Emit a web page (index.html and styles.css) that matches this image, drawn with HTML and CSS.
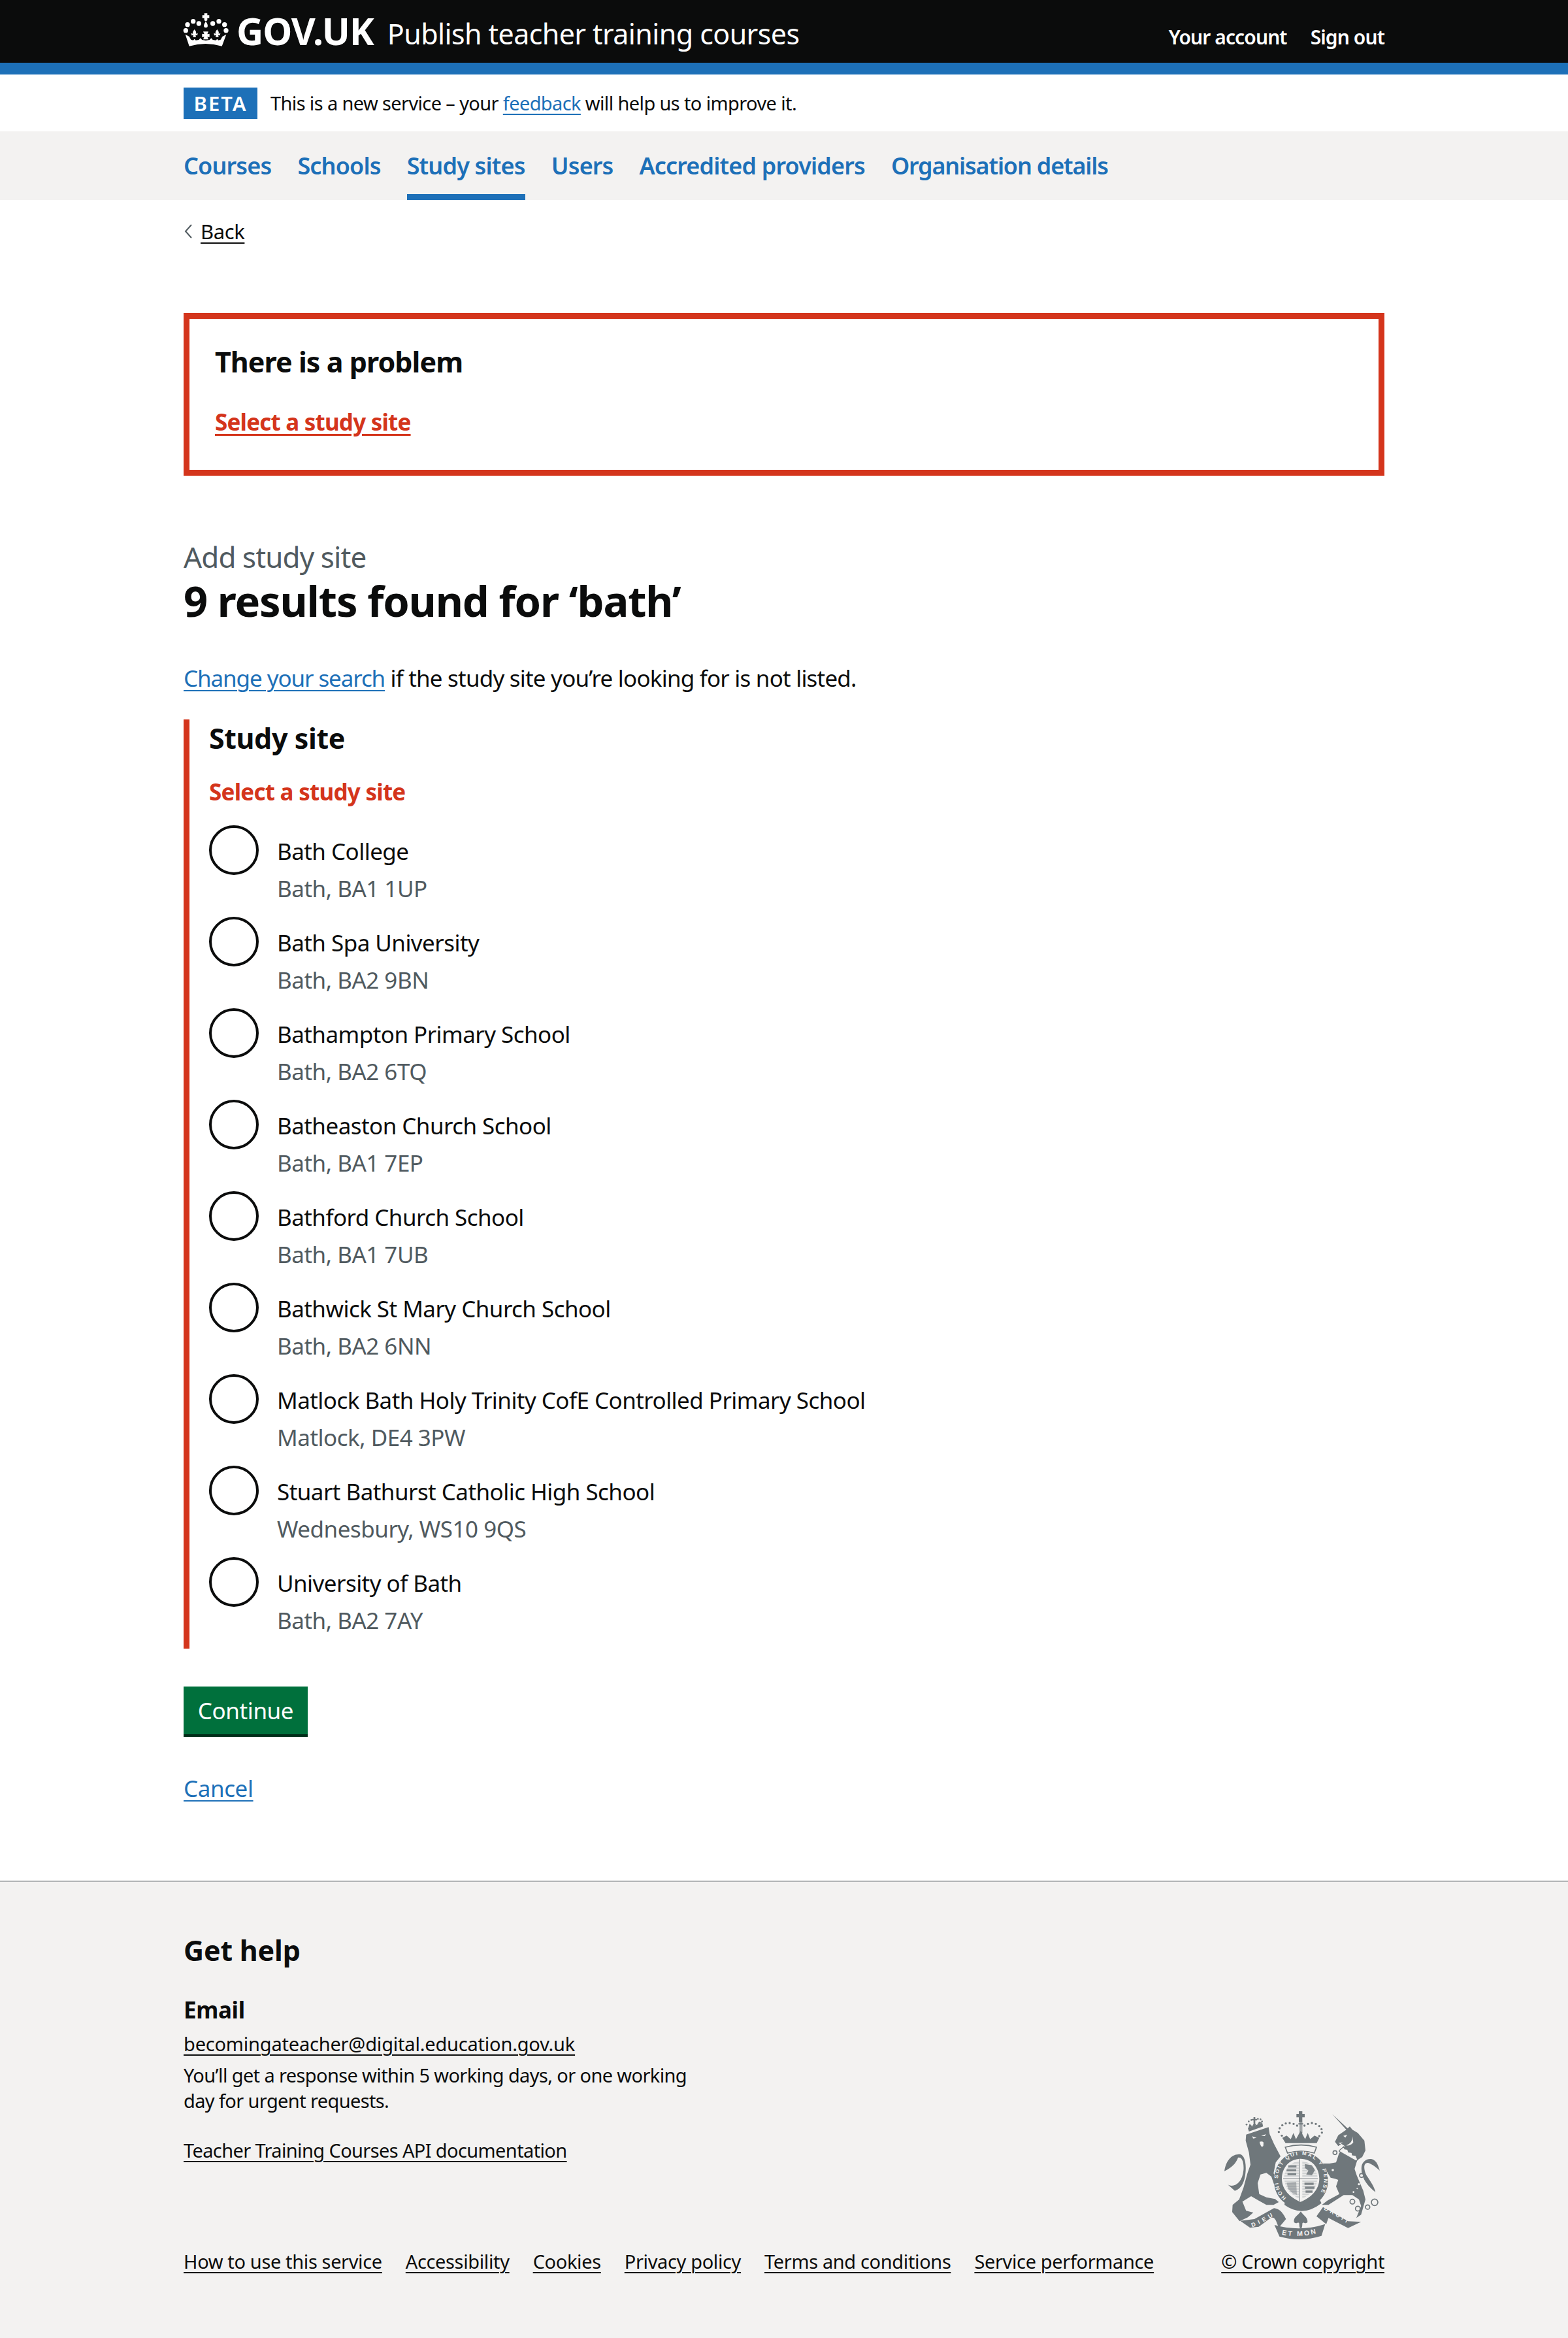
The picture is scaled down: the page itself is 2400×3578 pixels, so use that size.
FILE: index.html
```html
<!DOCTYPE html>
<html lang="en">
<head>
<meta charset="utf-8">
<title>Publish teacher training courses</title>
<link rel="stylesheet" href="styles.css">
</head>
<body>
<header class="topbar">
  <div class="wrap topbar-inner">
    <div class="brand">
      <svg class="crown" viewBox="0 0 270 180" aria-hidden="true">
        <g fill="#fff">
          <path d="M113 16h14v9h9v13h-9v10l-7 5l-7-5V38h-9V25h9z"/>
          <path d="M120 54c8 10 10 18 8 24c-2 5-14 5-16 0c-2-6 0-14 8-24z"/>
          <circle cx="62" cy="53" r="11"/><circle cx="180" cy="53" r="11"/>
          <circle cx="88" cy="63" r="11"/><circle cx="152" cy="63" r="11"/>
          <circle cx="36" cy="68" r="11"/><circle cx="206" cy="68" r="11"/>
          <circle cx="28" cy="95" r="11"/><circle cx="213" cy="95" r="11"/>
          <path d="M68 90c7 8 9 14 7 20l8-3l-2 11l-8-2l2 9h-14l2-9l-8 2l-2-11l8 3c-2-6 0-12 7-20z"/>
          <path d="M172 90c7 8 9 14 7 20l8-3l-2 11l-8-2l2 9h-14l2-9l-8 2l-2-11l8 3c-2-6 0-12 7-20z"/>
          <path d="M108 100h24l-5 12l10-2v16l-10-2l5 12h-24l5-12l-10 2v-16l10 2z"/>
          <path d="M26 113l18 10l8 14l10 3l6-6l6 6l14-2l7-8l8 8l17 3l17-3l8-8l7 8l14 2l6-6l6 6l10-3l8-14l18-10l-20 54q-75-22-150 0z"/>
        </g>
      </svg>
      <span class="logotype">GOV.UK</span>
      <span class="service">Publish teacher training courses</span>
    </div>
    <nav class="account">
      <a href="#">Your account</a>
      <a href="#">Sign out</a>
    </nav>
  </div>
</header>
<div class="blue-rule"></div>
<div class="wrap beta">
  <strong class="tag">BETA</strong>
  <span>This is a new service – your <a class="link" href="#">feedback</a> will help us to improve it.</span>
</div>
<nav class="tabs">
  <ul class="wrap tab-list">
    <li><a href="#">Courses</a></li>
    <li><a href="#">Schools</a></li>
    <li class="current"><a href="#">Study sites</a></li>
    <li><a href="#">Users</a></li>
    <li><a href="#">Accredited providers</a></li>
    <li><a href="#">Organisation details</a></li>
  </ul>
</nav>
<main class="wrap main">
  <a class="back" href="#"><svg class="chev" viewBox="0 0 15 24" aria-hidden="true"><path d="M12 2L3 12l9 10" fill="none" stroke="#505a5f" stroke-width="2"/></svg><span>Back</span></a>
  <section class="summary">
    <h2>There is a problem</h2>
    <a href="#">Select a study site</a>
  </section>
  <p class="caption">Add study site</p>
  <h1>9 results found for ‘bath’</h1>
  <p class="intro"><a class="link" href="#">Change your search</a> if the study site you’re looking for is not listed.</p>
  <form class="group">
    <h2 class="legend">Study site</h2>
    <p class="error">Select a study site</p>
    <div class="radio"><span class="circle"></span><div><div class="name">Bath College</div><div class="hint">Bath, BA1 1UP</div></div></div>
    <div class="radio"><span class="circle"></span><div><div class="name">Bath Spa University</div><div class="hint">Bath, BA2 9BN</div></div></div>
    <div class="radio"><span class="circle"></span><div><div class="name">Bathampton Primary School</div><div class="hint">Bath, BA2 6TQ</div></div></div>
    <div class="radio"><span class="circle"></span><div><div class="name">Batheaston Church School</div><div class="hint">Bath, BA1 7EP</div></div></div>
    <div class="radio"><span class="circle"></span><div><div class="name">Bathford Church School</div><div class="hint">Bath, BA1 7UB</div></div></div>
    <div class="radio"><span class="circle"></span><div><div class="name">Bathwick St Mary Church School</div><div class="hint">Bath, BA2 6NN</div></div></div>
    <div class="radio"><span class="circle"></span><div><div class="name">Matlock Bath Holy Trinity CofE Controlled Primary School</div><div class="hint">Matlock, DE4 3PW</div></div></div>
    <div class="radio"><span class="circle"></span><div><div class="name">Stuart Bathurst Catholic High School</div><div class="hint">Wednesbury, WS10 9QS</div></div></div>
    <div class="radio"><span class="circle"></span><div><div class="name">University of Bath</div><div class="hint">Bath, BA2 7AY</div></div></div>
  </form>
  <a class="button" href="#">Continue</a>
  <p class="cancel"><a class="link" href="#">Cancel</a></p>
</main>
<footer class="footer">
  <div class="wrap footer-inner">
    <h2>Get help</h2>
    <h3>Email</h3>
    <p class="mail"><a href="#">becomingateacher@digital.education.gov.uk</a></p>
    <p class="note">You’ll get a response within 5 working days, or one working<br>day for urgent requests.</p>
    <p class="api"><a href="#">Teacher Training Courses API documentation</a></p>
    <div class="meta">
      <ul>
        <li><a href="#">How to use this service</a></li>
        <li><a href="#">Accessibility</a></li>
        <li><a href="#">Cookies</a></li>
        <li><a href="#">Privacy policy</a></li>
        <li><a href="#">Terms and conditions</a></li>
        <li><a href="#">Service performance</a></li>
      </ul>
      <div class="copy">
        <svg class="crest" viewBox="510 135 735 615" aria-label="Royal coat of arms">
          <defs>
            <path id="ring" d="M806 548A106 112 0 1 1 942 548"/>
            <path id="rb1" d="M650 682Q705 660 762 622"/>
            <path id="rb2" d="M785 716Q870 734 962 706"/>
            <path id="rb3" d="M978 602Q1040 630 1106 680"/>
            <pattern id="hatch" width="4" height="4" patternUnits="userSpaceOnUse">
              <rect width="4" height="4" fill="#f3f2f1"/>
              <rect width="4" height="2" fill="#c5c9ca"/>
            </pattern>
          </defs>
          <g fill="#6f777b">
            <!-- lion -->
            <g transform="translate(510 135)">
              <path d="M112 122L215 88L220 120L240 165L270 222L248 250L238 300L262 338L272 352L240 350L228 315L205 298L178 305L165 345L172 395L205 410L245 418L262 432L238 445L205 445L170 425L135 405L95 430L112 472L145 480L120 502L82 520L48 478L50 445L80 420L100 365L118 300L132 260L125 205L110 150Z"/>
              <path d="M12 290C20 240 45 215 75 213C100 208 112 240 110 285C108 330 95 370 60 380L28 352C55 368 95 345 100 285C103 245 90 222 75 228C65 255 45 275 12 290Z"/>
              <path d="M125 108L190 85L186 68L120 92Z"/>
              <path d="M146 42h8v8h8v7h-8v14h-8V57h-8v-7h8z"/>
              <path d="M122 92L128 72L140 84L150 66L160 80L172 62L186 68Z"/>
              <circle cx="114" cy="76" r="4"/><circle cx="124" cy="62" r="4"/><circle cx="136" cy="55" r="4"/>
              <circle cx="166" cy="50" r="4"/><circle cx="178" cy="52" r="4"/><circle cx="185" cy="62" r="4"/>
              <g fill="#f3f2f1">
                <path d="M140 130l20 7l-16 3zM203 120l-22 9l17 0z"/>
                <path d="M174 155q12-4 18 3l-1 16q-6 8-11 0q-5-9-6-19z"/>
              </g>
            </g>
            <!-- royal crown -->
            <path d="M864 150h16v12h11v16h-11v22h-16v-22h-11v-16h11z"/>
            <path d="M803 296H946L958 272L936 262L916 278L905 250L893 278L872 240L851 278L839 250L827 278L808 262L788 272Z"/>
            <path d="M868 198h4v54h-4zM876 198h4v54h-4zM862 205h22v6h-22z"/>
            <path d="M802 315Q875 295 945 315L935 342Q875 324 812 342Z" fill="#f3f2f1" stroke="#6f777b" stroke-width="5"/>
            <g>
              <circle cx="772" cy="245" r="5"/><circle cx="776" cy="228" r="5"/><circle cx="788" cy="214" r="5"/>
              <circle cx="804" cy="206" r="5"/><circle cx="822" cy="204" r="5"/><circle cx="840" cy="208" r="5"/>
              <circle cx="856" cy="216" r="5"/><circle cx="786" cy="262" r="5"/>
              <circle cx="890" cy="216" r="5"/><circle cx="906" cy="208" r="5"/><circle cx="924" cy="204" r="5"/>
              <circle cx="942" cy="208" r="5"/><circle cx="958" cy="218" r="5"/><circle cx="968" cy="232" r="5"/>
              <circle cx="970" cy="248" r="5"/><circle cx="958" cy="264" r="5"/>
            </g>
            <!-- shield ring -->
            <path fill-rule="evenodd" d="M872 336C945 336 998 395 998 468C998 540 945 592 872 592C800 592 750 540 750 468C750 395 800 336 872 336ZM872 368C820 368 786 410 786 460C786 510 825 548 872 566C920 548 958 510 958 460C958 410 925 368 872 368Z"/>
            <!-- shield quarters -->
            <path d="M868 370v192M792 460h160" stroke="#6f777b" stroke-width="3"/>
            <g fill="url(#hatch)">
              <path d="M864 378C825 385 800 415 796 452H864Z"/>
              <path d="M880 378C920 385 945 415 950 452H880Z"/>
              <path d="M798 468C802 505 830 535 864 550V468Z"/>
              <path d="M880 468V550C915 535 945 505 948 468Z"/>
            </g>
            <g opacity=".85">
              <path d="M815 398h38v10h-38zM808 416h44v10h-44zM812 434h40v10h-40z"/>
              <path d="M892 392l32 6l14 22l-14 24l-26-4l10-18l-16-12z"/>
              <path d="M890 478h42v10h-42zM892 496h44v10h-44zM895 514h32v10h-32z"/>
              <path d="M808 478l44-4l3 60l-20-8l-20-20z" fill-opacity=".55"/>
            </g>
            <path d="M802 548Q875 618 958 552L968 572Q880 640 798 580Z"/>
            <!-- unicorn -->
            <g transform="translate(870 135)">
              <path d="M147 28L218 94L228 85L240 100L265 115L295 150L300 195L285 225L262 240L250 280L260 310L290 380L300 420L280 490L258 505L280 450L270 420L240 400L200 400L130 445L100 445L125 425L180 395L165 360L175 330L160 325L140 320L110 270L105 255L135 255L165 250L178 210L205 175L190 165L175 175L160 155L175 125L212 100Z"/>
              <path d="M282 270C285 240 320 225 340 240C355 250 360 270 366 288C350 272 330 258 312 252C290 250 290 280 305 310C325 340 340 360 346 386C325 370 310 355 295 330C285 310 280 290 282 270Z"/>
              <path d="M180 195L200 178L205 188L218 190L222 202L238 205L240 216L256 218L262 232L270 226L258 244L180 200Z" fill="#f3f2f1" stroke="#6f777b" stroke-width="4"/>
              <g fill="#f3f2f1">
                <path d="M198 128l18-6l-8 14zM176 160l20-2l-12 8zM240 130q2 30-28 42q20 2 32-14z"/>
                <circle cx="270" cy="350" r="5"/><circle cx="245" cy="386" r="4"/><circle cx="262" cy="370" r="3"/>
              </g>
              <g fill="#f3f2f1" stroke="#6f777b" stroke-width="5">
                <circle cx="160" cy="205" r="9"/><circle cx="150" cy="285" r="8"/><circle cx="282" cy="310" r="9"/>
                <circle cx="240" cy="430" r="11"/><circle cx="265" cy="462" r="11"/>
                <circle cx="310" cy="455" r="10"/><circle cx="342" cy="433" r="15"/>
              </g>
            </g>
            <!-- ribbons -->
            <path d="M595 653L660 645L750 595C780 597 795 625 805 645L772 685L760 655C755 640 745 635 735 640L680 680L640 685Z"/>
            <path d="M1150 658L1090 655L975 590L945 632L990 668L1000 640L1090 686Z"/>
            <path d="M752 672Q870 705 985 668L968 722Q870 752 775 725Z"/>
            <!-- fleur -->
            <path d="M873 610C885 630 905 635 904 660C890 670 885 655 880 665C880 680 878 688 873 688C868 688 866 680 866 665C861 655 856 670 842 660C838 635 860 630 873 610Z"/>
          </g>
          <g class="crest-text">
            <text font-size="24"><textPath href="#ring" textLength="500" lengthAdjust="spacing">HONI SOIT QUI MAL Y PENSE</textPath></text>
            <text font-size="27"><textPath href="#rb1" textLength="108">DIEU</textPath></text>
            <text font-size="32"><textPath href="#rb2" textLength="160">ET MON</textPath></text>
            <text font-size="27"><textPath href="#rb3" textLength="125">DROIT</textPath></text>
          </g>
        </svg>
        <a href="#">© Crown copyright</a>
      </div>
    </div>
  </div>
</footer>
</body>
</html>
```
FILE: styles.css
```css
* { box-sizing: border-box; }
html, body { margin: 0; padding: 0; }
body {
  font-family: "Noto Sans", "Liberation Sans", sans-serif;
  color: #0b0c0c;
  background: #fff;
  font-size: 35px;
  letter-spacing: -0.4px;
}
h1, h2, h3, p, ul { margin: 0; padding: 0; }
ul { list-style: none; }
.wrap { width: 1838px; margin: 0 auto; }
.link { color: #1d70b8; text-decoration: underline; text-underline-offset: 5px; text-decoration-thickness: 2px; }

.topbar { background: #0b0c0c; height: 96px; color: #fff; }
.topbar-inner { display: flex; justify-content: space-between; height: 100%; }
.brand { display: flex; align-items: center; }
.crown { width: 90px; height: 60px; margin-left: -6px; margin-right: -3px; margin-top: -6px; }
.logotype { font-weight: 700; font-size: 57px; letter-spacing: -1px; line-height: 1; margin-top: -2px; margin-right: 21px; }
.service { font-size: 43px; letter-spacing: -0.6px; margin-top: 6px; }
.account { display: flex; gap: 36px; align-items: center; padding-top: 16px; }
.account a { color: #fff; font-size: 30px; font-weight: 600; text-decoration: none; letter-spacing: -0.9px; }
.blue-rule { height: 18px; background: #1d70b8; }

.beta { display: flex; align-items: center; height: 87px; font-size: 29px; gap: 20px; letter-spacing: -0.62px; }
.tag { background: #1d70b8; color: #fff; width: 113px; height: 48px; display: flex; align-items: center; justify-content: center; font-size: 31px; letter-spacing: 2px; font-weight: 600; }

.tabs { background: #f3f2f1; height: 105px; }
.tab-list { display: flex; gap: 40px; height: 100%; }
.tab-list li { display: flex; align-items: center; border-bottom: 9px solid transparent; padding-top: 12px; padding-bottom: 3px; }
.tab-list li.current { border-bottom-color: #1d70b8; }
.tab-list a { color: #1d70b8; font-size: 36px; font-weight: 600; text-decoration: none; letter-spacing: -0.85px; }
.tab-list li:last-child a { letter-spacing: -1.2px; }

.main { padding-top: 23px; padding-bottom: 118px; }
.back { display: inline-flex; align-items: center; gap: 11px; color: #0b0c0c; font-size: 31px; height: 38px; text-decoration: none; }
.back span { text-decoration: underline; text-underline-offset: 5px; text-decoration-thickness: 2px; }
.chev { width: 15px; height: 24px; }

.summary { border: 9px solid #d4351c; height: 249px; margin-top: 103px; padding: 39px 39px; }
.summary h2 { font-size: 43px; font-weight: 700; line-height: 54px; letter-spacing: -0.95px; }
.summary a { display: block; margin-top: 42px; color: #d4351c; font-weight: 700; font-size: 35px; line-height: 46px; letter-spacing: -0.8px; text-underline-offset: 5px; }

.caption { color: #505a5f; font-size: 44px; line-height: 52px; margin-top: 98px; letter-spacing: -0.9px; }
h1 { font-size: 65px; font-weight: 700; line-height: 82px; letter-spacing: -1.15px; }
.intro { margin-top: 55px; line-height: 46px; font-size: 35px; letter-spacing: -0.8px; }
.intro .link { letter-spacing: -1.1px; }

.group { border-left: 9px solid #d4351c; padding-left: 30px; margin-top: 40px; padding-bottom: 6px; }
.legend { font-size: 43px; font-weight: 700; line-height: 52px; letter-spacing: -0.4px; padding-top: 3px; }
.error { color: #d4351c; font-weight: 700; font-size: 35px; line-height: 46px; margin-top: 33px; letter-spacing: -0.75px; margin-bottom: 28px; }
.radio { display: flex; gap: 28px; height: 140px; }
.radio:last-child { height: 134px; }
.circle { width: 76px; height: 76px; border: 4px solid #0b0c0c; border-radius: 50%; flex: none; }
.name { font-size: 35px; line-height: 46px; margin-top: 17px; letter-spacing: -0.55px; }
.hint { font-size: 35px; line-height: 46px; color: #505a5f; margin-top: 11px; letter-spacing: -0.5px; }

.button { display: block; width: 190px; height: 77px; margin-top: 58px; background: #00703c; border-bottom: 4px solid #002d18; color: #fff; font-size: 35px; text-align: center; line-height: 73px; text-decoration: none; }
.cancel { margin-top: 56px; line-height: 46px; }

.footer { background: #f3f2f1; border-top: 2px solid #b1b4b6; height: 701px; font-size: 29px; letter-spacing: -0.36px; }
.footer-inner { padding-top: 78px; }
.footer a { color: #0b0c0c; text-decoration: underline; text-underline-offset: 5px; text-decoration-thickness: 2px; }
.footer h2 { font-size: 43px; line-height: 54px; font-weight: 700; letter-spacing: -0.2px; }
.footer h3 { font-size: 35px; line-height: 46px; font-weight: 700; margin-top: 41px; }
.mail { margin-top: 9px; line-height: 40px; letter-spacing: -0.2px; }
.note { line-height: 39px; margin-top: 8px; letter-spacing: -0.62px; }
.api { margin-top: 37px; line-height: 40px; letter-spacing: -0.62px; }
.meta { display: flex; justify-content: space-between; align-items: flex-end; margin-top: -85px; }
.meta ul { display: flex; gap: 36px; line-height: 40px; }
.copy { display: flex; flex-direction: column; align-items: flex-end; gap: 10px; line-height: 40px; }
.crest { width: 245px; height: 205px; margin-right: 4px; }
.crest-text text { fill: #f3f2f1; font-family: "Liberation Sans", sans-serif; font-weight: 700; letter-spacing: 0; }
```
